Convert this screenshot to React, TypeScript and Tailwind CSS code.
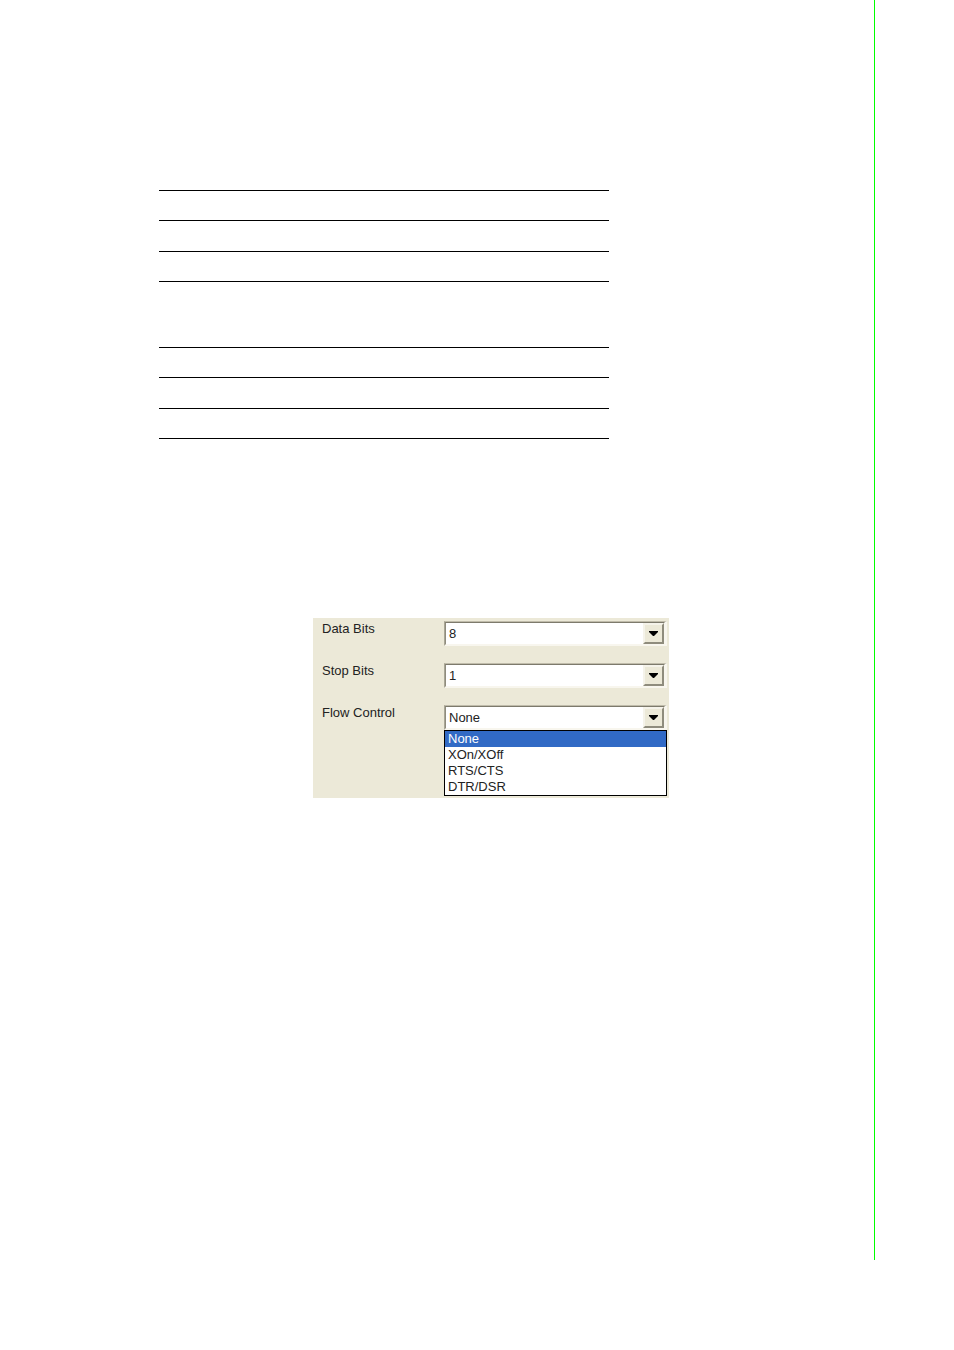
import { useState } from 'react'
import type { MouseEvent } from 'react'

const flowOptions = ['None', 'XOn/XOff', 'RTS/CTS', 'DTR/DSR']

const Rules = () => (
  <div className="flex h-[92px] w-full max-w-[450px] flex-col justify-between">
    <hr className="border-black" />
    <hr className="border-black" />
    <hr className="border-black" />
    <hr className="border-black" />
  </div>
)

interface ComboProps {
  id: string
  label: string
  value: string
  options: string[]
  onChange: (value: string) => void
  open?: boolean
  onToggle?: () => void
}

const Combo = ({ id, label, value, options, onChange, open = false, onToggle }: ComboProps) => {
  const handleMouseDown = (e: MouseEvent) => {
    if (!onToggle) return
    e.preventDefault()
    onToggle()
  }

  return (
    <div className="flex items-start">
      <label htmlFor={id} className="w-[122px] shrink-0 leading-4">
        {label}
      </label>
      <div className="relative min-w-0 flex-1">
        <div className="border-t border-r-2 border-b border-l border-t-[#c0bcab] border-r-[#f8f6ee] border-b-[#f8f6ee] border-l-[#a9a696]">
          <div className="relative flex h-[23px] items-center border border-t-[#7d7a6c] border-r-[#f8f6ee] border-b-[#f8f6ee] border-l-[#8f8c7d] bg-white">
            <select
              id={id}
              value={value}
              onChange={(e) => onChange(e.target.value)}
              onMouseDown={handleMouseDown}
              className="h-full w-full appearance-none bg-transparent pl-[3px] outline-none"
            >
              {options.map((option) => (
                <option key={option}>{option}</option>
              ))}
            </select>
            <span className="pointer-events-none absolute top-0 right-0 flex h-[21px] w-[21px] items-center justify-center border-2 border-t-[#f5f3ea] border-r-[#8f8c7d] border-b-[#8f8c7d] border-l-[#f5f3ea] bg-[#ece9d8]">
              <svg width="9" height="5" viewBox="0 0 9 5" aria-hidden="true">
                <path d="M0 0h9v1L5 5H4L0 1z" fill="#000" />
              </svg>
            </span>
          </div>
        </div>
        {open && (
          <ul role="listbox" aria-label={label} className="absolute top-full left-0 w-full border border-black bg-white">
            {options.map((option) => (
              <li
                key={option}
                role="option"
                aria-selected={option === value}
                onClick={() => onChange(option)}
                className={`h-4 cursor-default pl-[3px] leading-4 ${option === value ? 'bg-[#316ac5] text-white' : ''}`}
              >
                {option}
              </li>
            ))}
          </ul>
        )}
      </div>
    </div>
  )
}

export default function App() {
  const [dataBits, setDataBits] = useState('8')
  const [stopBits, setStopBits] = useState('1')
  const [flow, setFlow] = useState('None')
  const [open, setOpen] = useState(true)

  return (
    <div className="bg-white pr-[79px] pb-[90px]">
      <main className="border-r border-[#00ff00] pt-[190px] pb-[462px] font-['Liberation_Sans',Arial,sans-serif] text-[13px] text-[#222]">
        <div className="flex flex-col gap-[65px] pl-[159px]">
          <Rules />
          <Rules />
        </div>
        <form className="mt-[179px] ml-[313px] flex max-w-[356px] flex-col gap-[17px] bg-[#ece9d8] pt-[3px] pr-[2px] pb-[68px] pl-[9px]">
          <Combo id="data-bits" label="Data Bits" value={dataBits} options={['8', '7', '6', '5']} onChange={setDataBits} />
          <Combo id="stop-bits" label="Stop Bits" value={stopBits} options={['1', '2']} onChange={setStopBits} />
          <Combo
            id="flow-control"
            label="Flow Control"
            value={flow}
            options={flowOptions}
            onChange={(value) => {
              setFlow(value)
              setOpen(false)
            }}
            open={open}
            onToggle={() => setOpen(!open)}
          />
        </form>
      </main>
    </div>
  )
}
